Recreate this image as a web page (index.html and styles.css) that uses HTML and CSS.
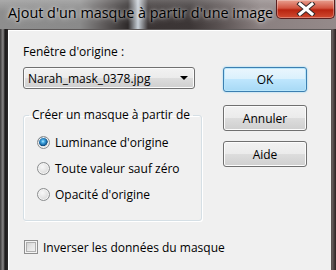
FILE: index.html
```html
<!DOCTYPE html>
<html lang="fr">
<head>
    <meta charset="UTF-8">
    <meta name="viewport" content="width=device-width, initial-scale=1.0">
    <title>Ajout d'un masque à partir d'une image</title>
    <link rel="stylesheet" href="styles.css">
</head>
<body>
    <div class="window">
        <div class="titlebar">
            <h1>Ajout d'un masque à partir d'une image</h1>
            <button class="close-button" aria-label="Fermer">
                <svg width="20" height="14" viewBox="0 0 20 14">
                    <path d="M4 2 L16 12 M16 2 L4 12" stroke="#3a2a2a" stroke-width="5" stroke-linecap="square"/>
                    <path d="M4 2 L16 12 M16 2 L4 12" stroke="#fff" stroke-width="3" stroke-linecap="square"/>
                </svg>
            </button>
        </div>
        <div class="client">
            <div class="main">
                <div class="left">
                    <div class="field-label">Fenêtre d'origine :</div>
                    <div class="combo">
                        <span>Narah_mask_0378.jpg</span>
                        <span class="arrow"></span>
                    </div>
                    <fieldset class="group">
                        <legend>Créer un masque à partir de</legend>
                        <label class="option"><input type="radio" name="source" checked> Luminance d'origine</label>
                        <label class="option"><input type="radio" name="source"> Toute valeur sauf zéro</label>
                        <label class="option"><input type="radio" name="source"> Opacité d'origine</label>
                    </fieldset>
                </div>
                <div class="buttons">
                    <button class="btn default">OK</button>
                    <button class="btn cancel">Annuler</button>
                    <button class="btn help">Aide</button>
                </div>
            </div>
            <label class="check"><input type="checkbox"> Inverser les données du masque</label>
        </div>
    </div>
</body>
</html>
```

FILE: styles.css
```css
* {
    margin: 0;
    padding: 0;
    box-sizing: border-box;
    font-family: 'Open Sans', 'Noto Sans', sans-serif;
}
body {
    width: 336px;
    height: 270px;
    overflow: hidden;
    background: #2a2626;
}
.window {
    display: flex;
    flex-direction: column;
    height: 270px;
    background: linear-gradient(90deg, #3a3838 0, #8a8888 3px, #1c1a1a 5px, #2a2727 8px, #2a2727 330px, #6a6060 332px, #2a2020 336px);
}
.titlebar {
    height: 29px;
    display: flex;
    justify-content: space-between;
    align-items: flex-start;
    background:
        linear-gradient(180deg, rgba(255,255,255,0.25) 0, rgba(255,255,255,0) 12px),
        linear-gradient(90deg, #8e8e8e 0, #8a8a8a 80px, #5c5858 105px, #2e2a2a 128px, #c8d0d8 138px, #3a3434 148px, #3c3636 190px, #5a5252 220px, #8a8080 260px, #958a8a 336px);
}
.titlebar h1 {
    font-size: 14.4px;
    font-weight: normal;
    color: #000;
    padding: 3px 0 0 8px;
    line-height: 20px;
    text-shadow: 0 0 6px rgba(255,255,255,0.8), 0 0 3px rgba(255,255,255,0.6);
    white-space: nowrap;
}
.close-button {
    width: 59px;
    height: 19px;
    margin-right: 1px;
    border: 1px solid #5a2020;
    border-top: none;
    border-radius: 0 0 5px 5px;
    background: linear-gradient(180deg, #e8a090 0, #d25440 45%, #b82410 55%, #d04a30 100%);
    box-shadow: inset 0 0 0 1px rgba(255,255,255,0.3);
    display: flex;
    align-items: center;
    justify-content: center;
}
.client {
    flex: 1;
    margin: 0 5px 0 8px;
    background: #f0f0f0;
    border-top: 1px solid #5c5858;
    box-shadow: inset 1px 1px 0 #fff;
    padding: 14px 0 0 15px;
    font-size: 12px;
    color: #000;
}
.main {
    display: flex;
    gap: 21px;
}
.left {
    width: 179px;
}
.field-label {
    line-height: 16px;
}
.combo {
    margin-top: 7px;
    width: 172px;
    height: 22px;
    border: 1px solid #707070;
    border-radius: 3px;
    background: linear-gradient(180deg, #f2f2f2 0, #ebebeb 50%, #dddddd 50%, #cfcfcf 100%);
    box-shadow: inset 0 0 0 1px #fbfbfb;
    display: flex;
    align-items: center;
    justify-content: space-between;
    padding: 0 6px 0 4px;
}
.arrow {
    width: 0;
    height: 0;
    border-left: 4px solid transparent;
    border-right: 4px solid transparent;
    border-top: 4px solid #000;
}
.group {
    margin-top: 18px;
    border: 1px solid #d5dfe5;
    border-radius: 3px;
    box-shadow: inset 1px 1px 0 #fff, 1px 1px 0 #fff;
    padding: 6px 0 13px 0;
}
.group legend {
    margin-left: 5px;
    padding: 0 3px;
    line-height: 16px;
    white-space: nowrap;
}
.option {
    display: flex;
    align-items: center;
    height: 26px;
    gap: 5px;
    padding-left: 13px;
}
input[type="radio"] {
    appearance: none;
    width: 13px;
    height: 13px;
    border-radius: 50%;
    border: 1px solid #8b8d8e;
    background: radial-gradient(circle at 40% 35%, #f8f8f8 0, #e2e2e2 55%, #c8c8c8 100%);
    box-shadow: inset 0 0 0 1px #f4f4f4;
}
input[type="radio"]:checked {
    background:
        radial-gradient(circle at 45% 40%, #b8ecff 0, #4aaee6 1.5px, #1d6eaa 3.5px, #0f4a7a 4.5px, rgba(15,74,122,0) 5px),
        radial-gradient(circle at 40% 35%, #f8f8f8 0, #e2e2e2 55%, #c8c8c8 100%);
}
.buttons {
    display: flex;
    flex-direction: column;
    padding-top: 23px;
}
.btn {
    width: 84px;
    height: 26px;
    font-size: 12px;
    color: #000;
    border: 1px solid #707070;
    border-radius: 3px;
    background: linear-gradient(180deg, #f2f2f2 0, #ebebeb 50%, #dddddd 50%, #cfcfcf 100%);
    box-shadow: inset 0 0 0 1px #fcfcfc;
}
.btn.default {
    height: 25px;
    border-color: #3c7fb1;
    background: linear-gradient(180deg, #eaf6fd 0, #d9f0fc 50%, #bee6fd 50%, #a7d9f5 100%);
    box-shadow: inset 0 0 0 1px #b8e6fb, 0 0 2px #7fd0f7;
}
.btn.cancel {
    margin-top: 13px;
}
.btn.help {
    margin-top: 10px;
}
.check {
    display: flex;
    align-items: center;
    gap: 5px;
    margin-top: 16px;
    margin-left: 1px;
    height: 20px;
}
input[type="checkbox"] {
    appearance: none;
    width: 14px;
    height: 14px;
    border: 1px solid #8f8f8f;
    background: linear-gradient(135deg, #c9c9c9 0, #e6e6e6 50%, #f6f6f6 100%);
    box-shadow: inset 0 0 0 1px #f4f4f4, inset 0 0 0 2px #b0b0b0;
}
```
